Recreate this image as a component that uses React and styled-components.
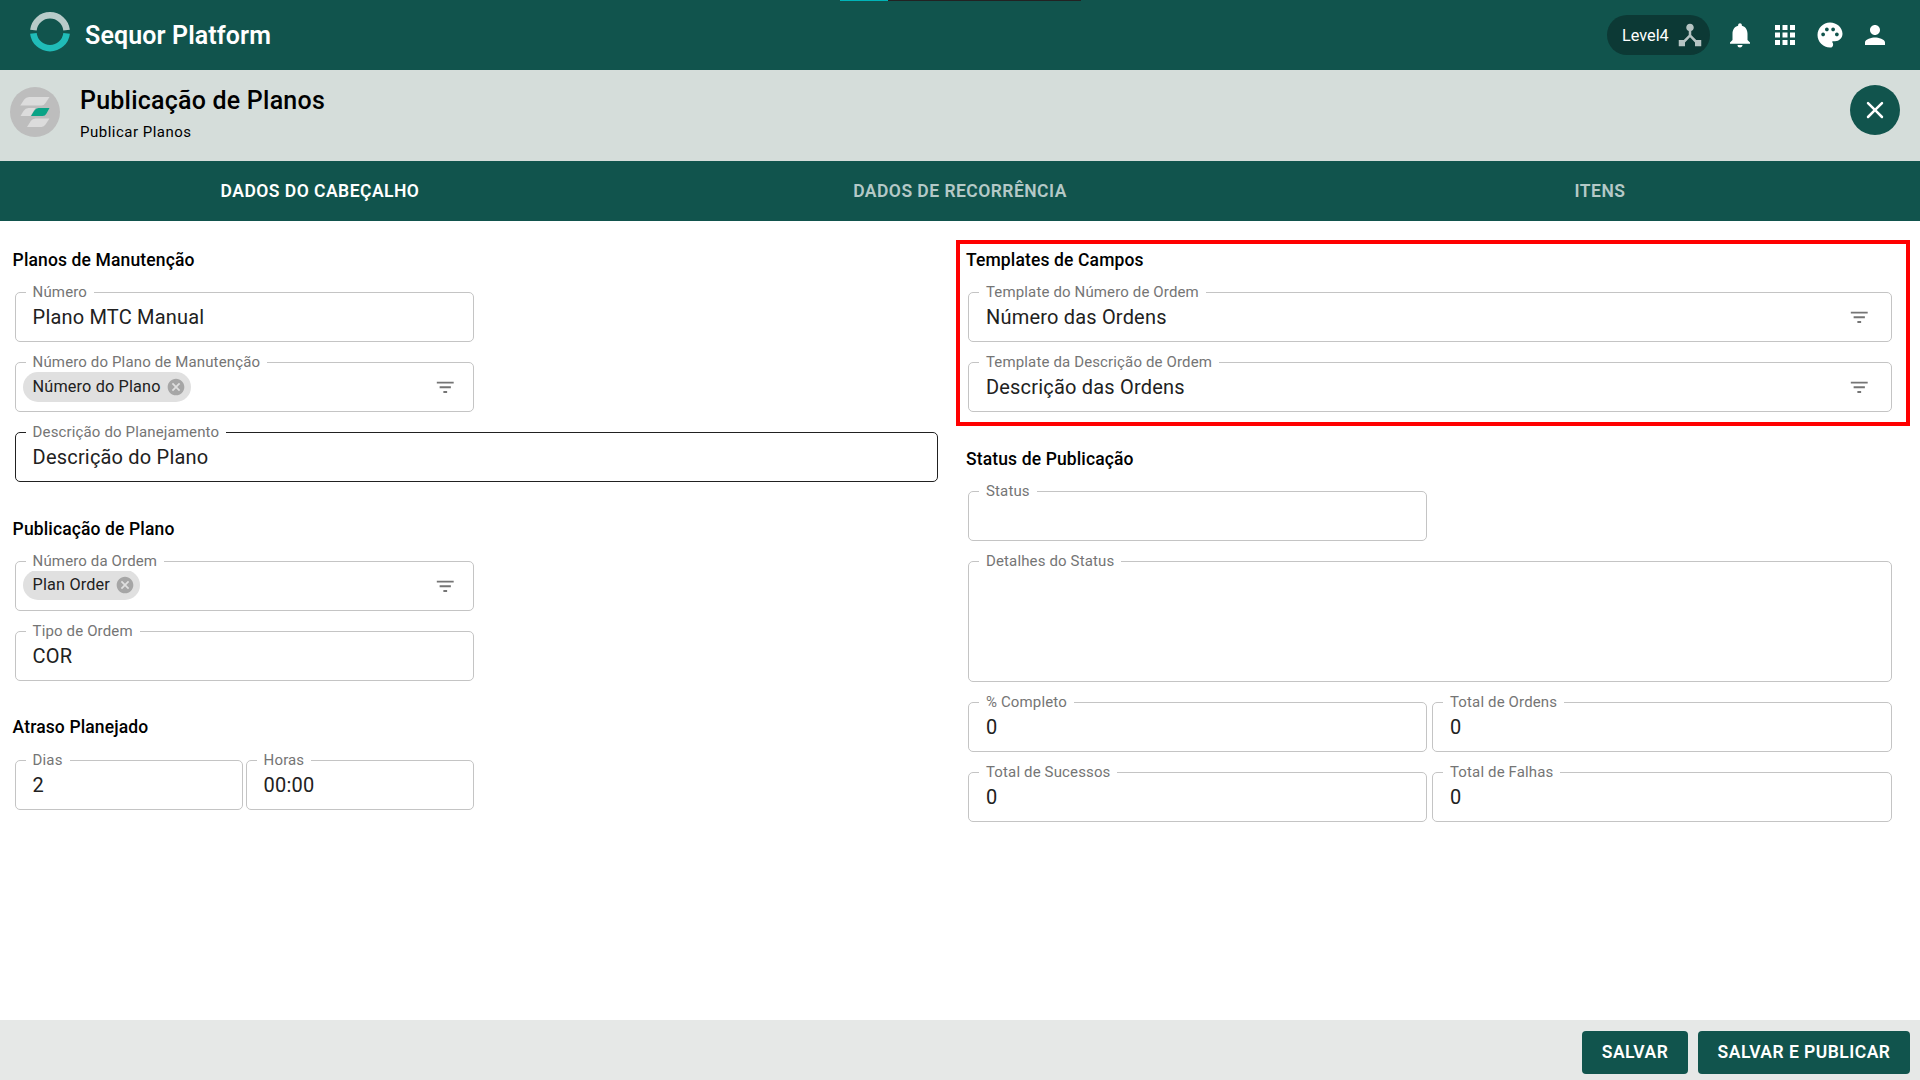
import styled, { createGlobalStyle } from 'styled-components';
import {
  MdApps,
  MdCancel,
  MdDeviceHub,
  MdFilterList,
  MdNotifications,
  MdPalette,
  MdPerson,
} from 'react-icons/md';

const GlobalStyle = createGlobalStyle`
  * {
    box-sizing: border-box;
  }
  body {
    margin: 0;
    font-family: Roboto, sans-serif;
    color: #000;
    background-color: #fff;
  }
`;

const Page = styled.div`
  display: flex;
  flex-direction: column;
  width: 1920px;
  height: 1080px;
  overflow: hidden;
`;

const TopBar = styled.header`
  position: relative;
  display: flex;
  align-items: center;
  height: 70px;
  padding: 0 30px;
  background-color: #11544d;
  color: #fff;
  & > svg {
    margin-bottom: 6px;
  }
`;

const Progress = styled.div`
  position: absolute;
  top: 0;
  left: 840px;
  width: 241px;
  height: 1px;
  background: linear-gradient(to right, #00b5b8 48px, #222 48px);
`;

const Brand = styled.h1`
  flex: 1;
  margin: 0 0 0 15px;
  font-size: 25px;
  font-weight: 600;
  letter-spacing: 0.12px;
`;

const Actions = styled.nav`
  display: flex;
  align-items: center;
  gap: 15px;
  & > svg {
    width: 30px;
    height: 30px;
  }
`;

const LevelChip = styled.div`
  display: flex;
  align-items: center;
  justify-content: space-between;
  width: 103px;
  height: 40px;
  padding: 0 5px 0 15px;
  border-radius: 20px;
  background-color: #0c3935;
  font-size: 16.25px;
  & > svg {
    width: 30px;
    height: 30px;
    opacity: 0.7;
  }
`;

const PageHeader = styled.section`
  display: flex;
  height: 91px;
  padding: 15px 20px 0 10px;
  background-color: #d5ddda;
  & > svg {
    margin-top: 2px;
  }
`;

const Titles = styled.div`
  flex: 1;
  margin-left: 20px;
  & > h2 {
    margin: 0;
    font-size: 25px;
    line-height: 32px;
    font-weight: 500;
    letter-spacing: 0.22px;
  }
  & > p {
    margin: 5px 0 0;
    font-size: 15px;
    line-height: 20px;
    letter-spacing: 0.5px;
  }
`;

const CloseButton = styled.button`
  display: flex;
  align-items: center;
  justify-content: center;
  width: 50px;
  height: 50px;
  padding: 0;
  border: none;
  border-radius: 50%;
  background-color: #11544d;
  color: #fff;
`;

const Tabs = styled.div`
  display: grid;
  grid-template-columns: repeat(3, 1fr);
  height: 60px;
  background-color: #11544d;
`;

const Tab = styled.button`
  padding: 0;
  border: none;
  background: none;
  font-family: inherit;
  font-size: 17.5px;
  font-weight: 600;
  letter-spacing: 0.47px;
  color: ${({ $active }) => ($active ? '#fff' : 'rgba(255, 255, 255, 0.7)')};
`;

const Content = styled.main`
  flex: 1;
  display: grid;
  grid-template-columns: 925.4px 954px;
  column-gap: 18px;
  padding: 19px 10px 0 12.6px;
`;

const Column = styled.div`
  display: flex;
  flex-direction: column;
`;

const Section = styled.section`
  padding-left: 2px;
  margin-top: ${({ $top }) => $top || 0}px;
`;

const Highlight = styled.div`
  height: 186px;
  border: 4px solid #f00;
  padding: 0 14px 0 6px;
`;

const StatusArea = styled.div`
  padding: 0 18px 0 10px;
`;

const SectionTitle = styled.h3`
  height: 33px;
  margin: 0 0 ${({ $gap }) => $gap || 19}px -2px;
  font-size: 17.5px;
  line-height: ${({ $line }) => $line || 40}px;
  font-weight: 500;
  letter-spacing: 0.13px;
`;

const Fields = styled.div`
  display: grid;
  grid-template-columns: ${({ $columns }) => $columns || '1fr'};
  gap: 20px ${({ $gap }) => $gap || 5}px;
  width: ${({ $width }) => ($width ? `${$width}px` : 'auto')};
`;

const FieldBox = styled.div`
  position: relative;
  display: flex;
  justify-content: space-between;
  height: ${({ $height }) => $height || 50}px;
  padding: 0 ${({ $iconGap }) => $iconGap || 16}px 0 ${({ $chip }) => ($chip ? 7 : 17)}px;
  border: 1px solid ${({ $focused }) => ($focused ? '#212121' : '#c4c4c4')};
  border-radius: 5px;
  & > svg {
    width: 22.5px;
    height: 22.5px;
    margin-top: 13px;
    color: #757575;
  }
`;

const Label = styled.label`
  position: absolute;
  top: -11px;
  left: 10px;
  padding: 0 7px;
  background-color: #fff;
  font-size: 15px;
  line-height: 20px;
  letter-spacing: 0.14px;
  white-space: nowrap;
  color: #757575;
`;

const Value = styled.span`
  font-size: 20px;
  line-height: 49px;
  letter-spacing: 0.19px;
  color: #212121;
`;

const Chip = styled.span`
  display: flex;
  align-items: center;
  height: 30px;
  margin-top: 8.6px;
  padding: 0 5px 0 10px;
  border-radius: 15px;
  background-color: #e0e0e0;
  font-size: 16.25px;
  line-height: 29.4px;
  letter-spacing: 0.15px;
  color: #212121;
  & > svg {
    width: 20px;
    height: 20px;
    margin-left: 5px;
    color: #a6a6a6;
  }
`;

const ChipText = styled.span`
  height: 30px;
`;

const Footer = styled.footer`
  display: flex;
  justify-content: flex-end;
  gap: 10px;
  height: 60px;
  padding: 11px 10px 0 0;
  background-color: #e6e8e7;
`;

const FooterButton = styled.button`
  width: ${({ $width }) => $width}px;
  height: 43px;
  padding: 0 0 2px;
  border: none;
  border-radius: 4px;
  background-color: #11544d;
  font-family: inherit;
  font-size: 17.5px;
  font-weight: 600;
  letter-spacing: 0.47px;
  color: #fff;
`;

function Logo() {
  return (
    <svg width="40" height="40" viewBox="0 0 40 40" fill="none" strokeWidth="6.6">
      <path d="M3.4 18.2a16.7 16.7 0 0 1 33.2 0" stroke="#b8cbc9" />
      <path d="M3.4 21.3a16.7 16.7 0 0 0 33.2 0" stroke="#20bcb8" />
    </svg>
  );
}

function PlanIcon() {
  return (
    <svg width="50" height="50" viewBox="0 0 50 50">
      <circle cx="25" cy="25" r="25" fill="#bdbdbd" />
      <path d="M10.3 18.5l3.9-5.9Q16 10 19 10h20.5l-4 6Q34 18.5 31.5 18.5z" fill="#dcdcdc" />
      <path d="M10.5 29l3-5Q15.5 21 18.5 21h7l-5 8z" fill="#dcdcdc" />
      <path d="M21 29l3.2-5.3Q26 21 28.5 21h11l-3 5.5Q35.2 29 32.5 29z" fill="#0aa386" />
      <path d="M17 40l3.8-5.9Q22.5 31.6 25.500 31.6h14l-4 6Q34 40 31.5 40z" fill="#dcdcdc" />
    </svg>
  );
}

function CloseIcon() {
  return (
    <svg width="30" height="30" viewBox="0 0 24 24" fill="currentColor">
      <path d="M18.3 5.71a.996.996 0 0 0-1.41 0L12 10.59 7.11 5.7a.996.996 0 0 0-1.41 0c-.39.39-.39 1.02 0 1.41L10.59 12 5.7 16.89c-.39.39-.39 1.02 0 1.41.39.39 1.02.39 1.41 0L12 13.41l4.89 4.89c.39.39 1.02.39 1.41 0 .39-.39.39-1.02 0-1.41L13.41 12l4.89-4.89c.38-.38.38-1.02 0-1.4z" />
    </svg>
  );
}

function Field({ label, value, chip, filter, focused, height, iconGap }) {
  return (
    <FieldBox $focused={focused} $height={height} $chip={Boolean(chip)} $iconGap={iconGap}>
      <Label>{label}</Label>
      {chip ? (
        <Chip>
          <ChipText>{chip}</ChipText>
          <MdCancel />
        </Chip>
      ) : (
        <Value>{value}</Value>
      )}
      {filter && <MdFilterList />}
    </FieldBox>
  );
}

export default function App() {
  return (
    <Page>
      <GlobalStyle />
      <TopBar>
        <Progress />
        <Logo />
        <Brand>Sequor Platform</Brand>
        <Actions>
          <LevelChip>
            Level4
            <MdDeviceHub />
          </LevelChip>
          <MdNotifications />
          <MdApps />
          <MdPalette />
          <MdPerson />
        </Actions>
      </TopBar>
      <PageHeader>
        <PlanIcon />
        <Titles>
          <h2>Publicação de Planos</h2>
          <p>Publicar Planos</p>
        </Titles>
        <CloseButton>
          <CloseIcon />
        </CloseButton>
      </PageHeader>
      <Tabs>
        <Tab $active>DADOS DO CABEÇALHO</Tab>
        <Tab>DADOS DE RECORRÊNCIA</Tab>
        <Tab>ITENS</Tab>
      </Tabs>
      <Content>
        <Column>
          <Section>
            <SectionTitle>Planos de Manutenção</SectionTitle>
            <Fields>
              <Fields $width={459}>
                <Field label="Número" value="Plano MTC Manual" />
                <Field label="Número do Plano de Manutenção" chip="Número do Plano" filter />
              </Fields>
              <Field label="Descrição do Planejamento" value="Descrição do Plano" focused />
            </Fields>
          </Section>
          <Section $top={26.8}>
            <SectionTitle>Publicação de Plano</SectionTitle>
            <Fields $width={459}>
              <Field label="Número da Ordem" chip="Plan Order" filter />
              <Field label="Tipo de Ordem" value="COR" />
            </Fields>
          </Section>
          <Section $top={26.8}>
            <SectionTitle $line={38}>Atraso Planejado</SectionTitle>
            <Fields $width={459} $columns="1fr 1fr" $gap={3}>
              <Field label="Dias" value="2" />
              <Field label="Horas" value="00:00" />
            </Fields>
          </Section>
        </Column>
        <Column>
          <Highlight>
            <Section>
              <SectionTitle $gap={15} $line={32}>
                Templates de Campos
              </SectionTitle>
              <Fields>
                <Field label="Template do Número de Ordem" value="Número das Ordens" filter iconGap={20.5} />
                <Field label="Template da Descrição de Ordem" value="Descrição das Ordens" filter iconGap={20.5} />
              </Fields>
            </Section>
          </Highlight>
          <StatusArea>
            <Section $top={13}>
              <SectionTitle>Status de Publicação</SectionTitle>
              <Fields>
                <Fields $width={459}>
                  <Field label="Status" />
                </Fields>
                <Field label="Detalhes do Status" height={121} />
                <Fields $columns="459px 1fr">
                  <Field label="% Completo" value="0" />
                  <Field label="Total de Ordens" value="0" />
                  <Field label="Total de Sucessos" value="0" />
                  <Field label="Total de Falhas" value="0" />
                </Fields>
              </Fields>
            </Section>
          </StatusArea>
        </Column>
      </Content>
      <Footer>
        <FooterButton $width={106}>SALVAR</FooterButton>
        <FooterButton $width={212}>SALVAR E PUBLICAR</FooterButton>
      </Footer>
    </Page>
  );
}
